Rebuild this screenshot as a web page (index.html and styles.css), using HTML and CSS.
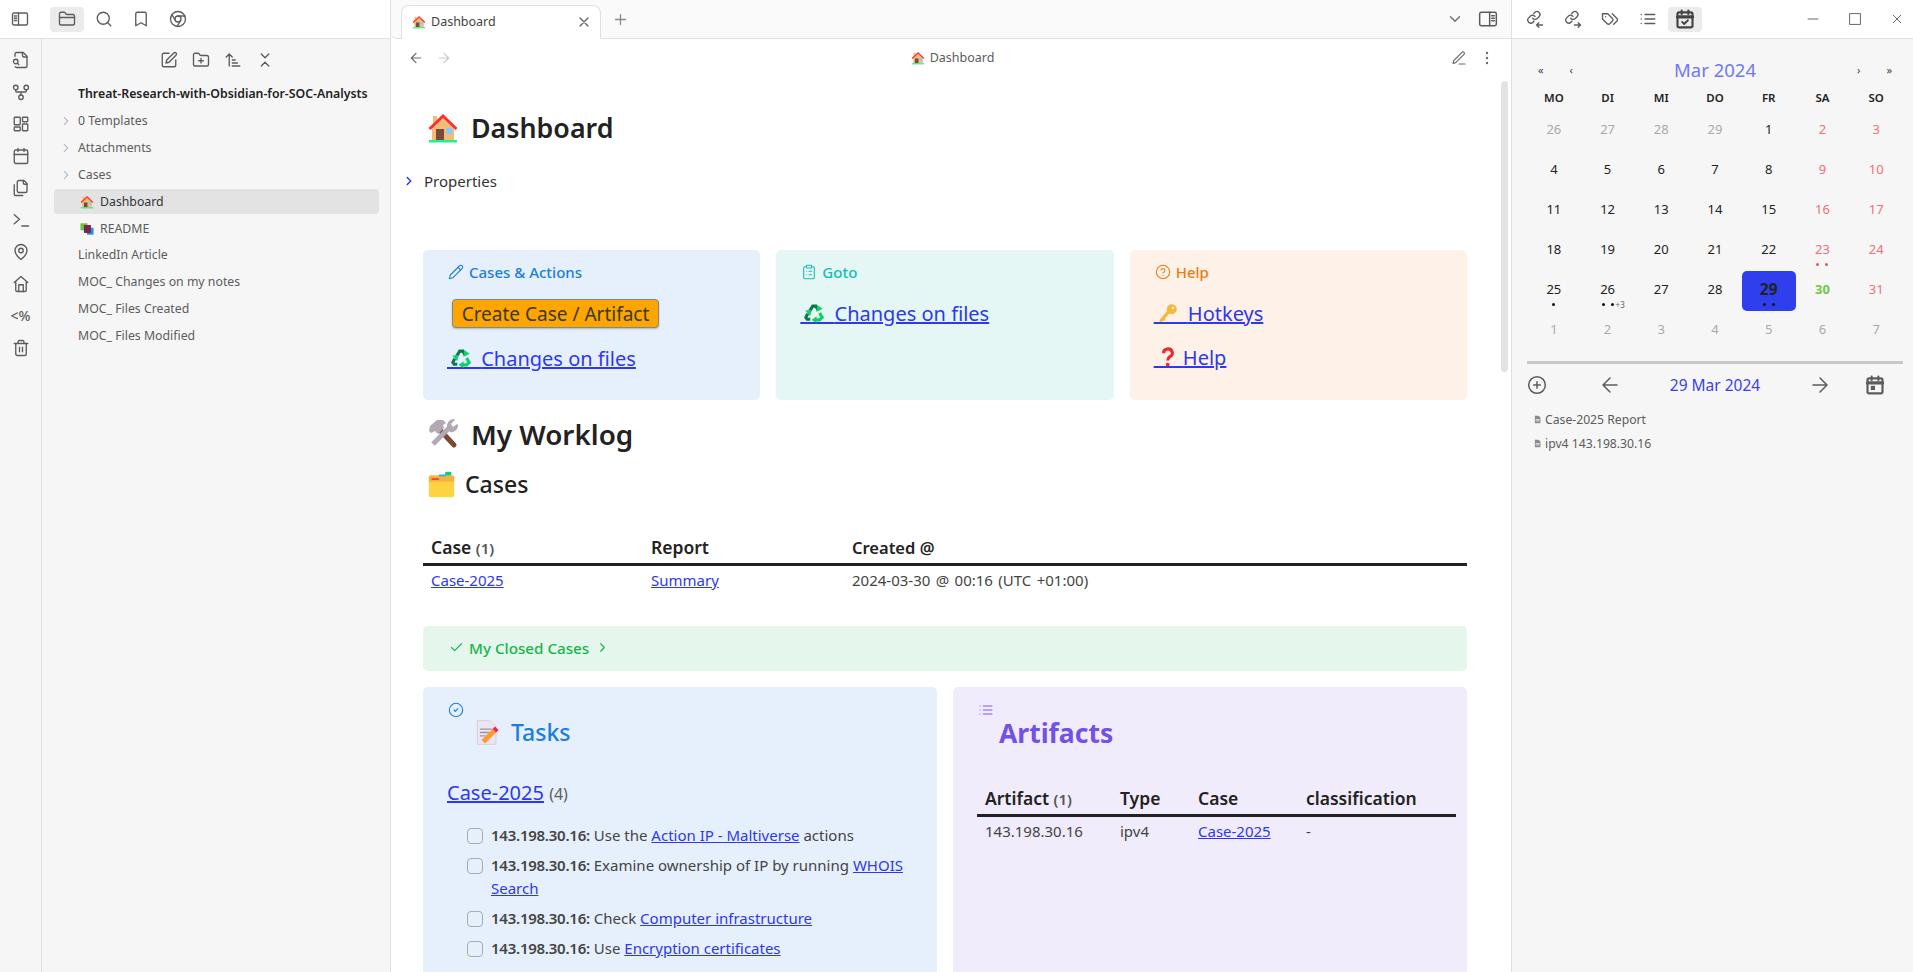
FILE: index.html
```html
<!DOCTYPE html>
<html lang="en">
<head>
    <meta charset="UTF-8">
    <title>Dashboard - Obsidian</title>
    <link rel="stylesheet" href="styles.css">
</head>
<body>
    <svg class="sprite" xmlns="http://www.w3.org/2000/svg">
        <symbol id="sidebar-l" viewBox="0 0 24 24"><rect x="2" y="4" width="20" height="16" rx="2"/><path d="M10 4v16M4.500 8h3M4.500 11h3M4.500 14h3"/></symbol>
        <symbol id="sidebar-r" viewBox="0 0 24 24"><rect x="2" y="4" width="20" height="16" rx="2"/><path d="M14 4v16M16.500 8h3M16.500 11h3M16.500 14h3"/></symbol>
        <symbol id="folder" viewBox="0 0 24 24"><path d="M20 20a2 2 0 0 0 2-2V8a2 2 0 0 0-2-2h-7.900a2 2 0 0 1-1.690-.9L9.600 3.900A2 2 0 0 0 7.930 3H4a2 2 0 0 0-2 2v13a2 2 0 0 0 2 2Z"/><path d="M2 10h20"/></symbol>
        <symbol id="search" viewBox="0 0 24 24"><circle cx="11" cy="11" r="8"/><path d="m21 21-4.300-4.300"/></symbol>
        <symbol id="bookmark" viewBox="0 0 24 24"><path d="m19 21-7-4-7 4V5a2 2 0 0 1 2-2h10a2 2 0 0 1 2 2v16z"/></symbol>
        <symbol id="chrome" viewBox="0 0 24 24"><circle cx="12" cy="12" r="10"/><circle cx="12" cy="12" r="4"/><path d="M21.170 8H12M3.950 6.060 8.540 14M10.880 21.940 15.460 14"/></symbol>
        <symbol id="file-search" viewBox="0 0 24 24"><path d="M14 2v4a2 2 0 0 0 2 2h4"/><path d="M4.268 21a2 2 0 0 0 1.727 1H18a2 2 0 0 0 2-2V7l-5-5H6a2 2 0 0 0-2 2v3"/><path d="m9 18-1.500-1.500"/><circle cx="5" cy="14" r="3"/></symbol>
        <symbol id="fork" viewBox="0 0 24 24"><circle cx="12" cy="19" r="3"/><circle cx="5" cy="6" r="3"/><circle cx="19" cy="6" r="3"/><path d="M19 9v2c0 .6-.4 1-1 1H6c-.6 0-1-.4-1-1V9M12 12v4"/></symbol>
        <symbol id="dash" viewBox="0 0 24 24"><rect x="3" y="3" width="8" height="10" rx="1"/><rect x="14" y="3" width="7" height="6" rx="1"/><rect x="14" y="12" width="7" height="9" rx="1"/><rect x="3" y="16" width="8" height="5" rx="1"/></symbol>
        <symbol id="calendar" viewBox="0 0 24 24"><path d="M8 2v4M16 2v4"/><rect x="3" y="4" width="18" height="18" rx="2"/><path d="M3 10h18"/></symbol>
        <symbol id="files" viewBox="0 0 24 24"><path d="M20 7h-3a2 2 0 0 1-2-2V2"/><path d="M9 18a2 2 0 0 1-2-2V4a2 2 0 0 1 2-2h7l4 4v10a2 2 0 0 1-2 2Z"/><path d="M3 7.600v12.800A1.600 1.600 0 0 0 4.600 22h9.800"/></symbol>
        <symbol id="terminal" viewBox="0 0 24 24"><path d="m3 17 7-6-7-6M13 20h9"/></symbol>
        <symbol id="pin" viewBox="0 0 24 24"><path d="M20 10c0 6-8 12-8 12s-8-6-8-12a8 8 0 0 1 16 0Z"/><circle cx="12" cy="10" r="3"/></symbol>
        <symbol id="home" viewBox="0 0 24 24"><path d="m3 10 9-8 9 8M5 9v11a2 2 0 0 0 2 2h10a2 2 0 0 0 2-2V9"/><path d="M9 22V13h6v9"/></symbol>
        <symbol id="trash" viewBox="0 0 24 24"><path d="M3 6h18M19 6v14c0 1-1 2-2 2H7c-1 0-2-1-2-2V6M8 6V4c0-1 1-2 2-2h4c1 0 2 1 2 2v2M10 11v6M14 11v6"/></symbol>
        <symbol id="edit" viewBox="0 0 24 24"><path d="M12 3H5a2 2 0 0 0-2 2v14a2 2 0 0 0 2 2h14a2 2 0 0 0 2-2v-7"/><path d="M18.375 2.625a2.121 2.121 0 1 1 3 3L12 15l-4 1 1-4Z"/></symbol>
        <symbol id="folder-plus" viewBox="0 0 24 24"><path d="M12 10v6M9 13h6"/><path d="M20 20a2 2 0 0 0 2-2V8a2 2 0 0 0-2-2h-7.900a2 2 0 0 1-1.690-.9L9.600 3.900A2 2 0 0 0 7.930 3H4a2 2 0 0 0-2 2v13a2 2 0 0 0 2 2Z"/></symbol>
        <symbol id="sort" viewBox="0 0 24 24"><path d="m3 8 4-4 4 4M7 4v16M11 12h4M11 16h7M11 20h10"/></symbol>
        <symbol id="collapse" viewBox="0 0 24 24"><path d="m7 20 5-5 5 5M7 4l5 5 5-5"/></symbol>
        <symbol id="chev-r" viewBox="0 0 24 24"><path d="m9 18 6-6-6-6"/></symbol>
        <symbol id="chev-d" viewBox="0 0 24 24"><path d="m6 9 6 6 6-6"/></symbol>
        <symbol id="x" viewBox="0 0 24 24"><path d="M18 6 6 18M6 6l12 12"/></symbol>
        <symbol id="plus" viewBox="0 0 24 24"><path d="M5 12h14M12 5v14"/></symbol>
        <symbol id="arrow-l" viewBox="0 0 24 24"><path d="m12 19-7-7 7-7M19 12H5"/></symbol>
        <symbol id="arrow-r" viewBox="0 0 24 24"><path d="M5 12h14M12 5l7 7-7 7"/></symbol>
        <symbol id="pencil-line" viewBox="0 0 24 24"><path d="M12 21h9M16.500 3.500a2.120 2.120 0 0 1 3 3L7 19l-4 1 1-4Z"/></symbol>
        <symbol id="more" viewBox="0 0 24 24"><circle cx="12" cy="4.500" r="1.800" fill="currentColor" stroke="none"/><circle cx="12" cy="12" r="1.800" fill="currentColor" stroke="none"/><circle cx="12" cy="19.500" r="1.800" fill="currentColor" stroke="none"/></symbol>
        <symbol id="link-in" viewBox="0 0 24 24"><path d="M9 11a4 4 0 0 0 6 .4l2.400-2.400a4 4 0 0 0-5.700-5.700l-1.400 1.400"/><path d="M12 8.500a4 4 0 0 0-6-.4l-2.400 2.400a4 4 0 0 0 5.700 5.700l1.400-1.400"/><path d="M22 20h-8M17 17l-3 3 3 3"/></symbol>
        <symbol id="link-out" viewBox="0 0 24 24"><path d="M9 11a4 4 0 0 0 6 .4l2.400-2.400a4 4 0 0 0-5.700-5.700l-1.400 1.400"/><path d="M12 8.500a4 4 0 0 0-6-.4l-2.400 2.400a4 4 0 0 0 5.700 5.700l1.400-1.400"/><path d="M14 20h8M19 17l3 3-3 3"/></symbol>
        <symbol id="tags" viewBox="0 0 24 24"><path d="M9 5H2v7l6.290 6.290c.94.94 2.480.94 3.420 0l3.580-3.580c.94-.94.94-2.480 0-3.420L9 5Z"/><path d="M6 9.010V9"/><path d="m15 5 6.300 6.300a2.400 2.400 0 0 1 0 3.400L17 19"/></symbol>
        <symbol id="list" viewBox="0 0 24 24"><path d="M8 6h13M8 12h13M8 18h13M3 6h.01M3 12h.01M3 18h.01"/></symbol>
        <symbol id="cal-check" viewBox="0 0 24 24"><path d="M8 2v4M16 2v4" stroke-width="2.600"/><rect x="3" y="4" width="18" height="18" rx="2" stroke-width="2.600"/><path d="M3 9.500h18" stroke-width="4"/><path d="m8.500 15.500 2.500 2.500 4.500-4.500" stroke-width="2.200"/></symbol>
        <symbol id="cal-dot" viewBox="0 0 24 24"><path d="M8 2v4M16 2v4" stroke-width="2.600"/><rect x="3" y="4" width="18" height="18" rx="2" stroke-width="2.600"/><path d="M3 9.500h18" stroke-width="4"/><rect x="7" y="13" width="5" height="5" fill="currentColor" stroke="none"/></symbol>
        <symbol id="minus" viewBox="0 0 24 24"><path d="M4 12h16"/></symbol>
        <symbol id="square" viewBox="0 0 24 24"><rect x="4" y="4" width="16" height="16"/></symbol>
        <symbol id="pencil" viewBox="0 0 24 24"><path d="M17 3a2.850 2.830 0 1 1 4 4L7.500 20.500 2 22l1.500-5.500Z"/><path d="m15 5 4 4"/></symbol>
        <symbol id="clipboard" viewBox="0 0 24 24"><rect x="8" y="2" width="8" height="4" rx="1"/><path d="M16 4h2a2 2 0 0 1 2 2v14a2 2 0 0 1-2 2H6a2 2 0 0 1-2-2V6a2 2 0 0 1 2-2h2M12 11h4M12 16h4M8 11h.01M8 16h.01"/></symbol>
        <symbol id="help" viewBox="0 0 24 24"><circle cx="12" cy="12" r="10"/><path d="M9.090 9a3 3 0 0 1 5.830 1c0 2-3 3-3 3M12 17h.01"/></symbol>
        <symbol id="check" viewBox="0 0 24 24"><path d="M20 6 9 17l-5-5"/></symbol>
        <symbol id="check-circle" viewBox="0 0 24 24"><circle cx="12" cy="12" r="10"/><path d="m9 12 2 2 4-4"/></symbol>
        <symbol id="plus-circle" viewBox="0 0 24 24"><circle cx="12" cy="12" r="10"/><path d="M8 12h8M12 8v8"/></symbol>
        <symbol id="doc" viewBox="0 0 24 24"><path fill="#8a8a8a" stroke="none" d="M5 2h10l5 5v15H5z"/><path stroke="#f6f6f6" stroke-width="2" d="M8 12h9M8 16h9"/></symbol>

        <symbol id="e-house" viewBox="0 0 32 32"><rect x="6" y="4" width="4" height="9" fill="#f4bd77"/><path fill="#f4bd77" d="M5 15 16 5l11 10v13H5z"/><path fill="none" stroke="#ff2d2d" stroke-width="2.800" d="M2.500 17 16 4l13.500 13"/><rect x="9" y="17" width="8" height="11" fill="#7b4a3a"/><rect x="19" y="16" width="6" height="6" fill="#8cc9ff"/><rect x="2" y="28" width="28" height="2.500" fill="#19f28f"/></symbol>
        <symbol id="e-recycle" viewBox="0 0 32 32"><g fill="none" stroke-width="5"><path stroke="#0a7a4d" d="M9 13 14 5h5l4 7"/><path stroke="#0a7a4d" d="M10 26H5l-2-3 3-6"/><path stroke="#10cf67" d="M18 27h7l4-4-4-7"/></g><path fill="#10cf67" d="m21 3 9 6-10 5zM20 21l-8 6 8 5zM2 12l10-1-2 10z"/></symbol>
        <symbol id="e-key" viewBox="0 0 32 32"><path stroke="#f5b83d" stroke-width="5" stroke-linecap="round" fill="none" d="M18 13 5 28"/><circle cx="22" cy="10" r="8" fill="#f5b83d"/><circle cx="24" cy="8" r="2" fill="#fdf0e6"/><path stroke="#f5b83d" stroke-width="3" d="m8 25 3 3"/></symbol>
        <symbol id="e-question" viewBox="0 0 32 32"><path fill="none" stroke="#f5222d" stroke-width="5" d="M9 10a7 6.500 0 1 1 10 5.500c-2.500 1.600-3.500 3-3.500 6"/><circle cx="15.500" cy="28" r="3" fill="#f5222d"/></symbol>
        <symbol id="e-tools" viewBox="0 0 32 32"><path stroke="#7a4a32" stroke-width="5" stroke-linecap="round" d="M13 12 27 27"/><path fill="#b3a9b6" d="M3 8 10 2h6l3 3-3 2 1 3-6 6-3-3-4 2-2-2z"/><path stroke="#b3a9b6" stroke-width="5" d="M6 26 24 8"/><path fill="#b3a9b6" d="M20 8c0-4 3-7 7-7l1 1-4 4 2 3 4-3 1 1c0 5-4 8-8 7z"/></symbol>
        <symbol id="e-folder" viewBox="0 0 32 32"><rect x="2" y="6" width="28" height="24" rx="2" fill="#ffd23f"/><path fill="#f9b040" d="M2 8a2 2 0 0 1 2-2h24a2 2 0 0 1 2 2v5H2z"/><rect x="13" y="5" width="8" height="2" fill="#1fb5e6"/><rect x="5" y="9" width="8" height="2" fill="#f5423b"/><rect x="20" y="2" width="7" height="4" rx="1.500" fill="#19c77d"/></symbol>
        <symbol id="e-memo" viewBox="0 0 32 32"><path fill="#ece6f3" stroke="#cfc8d8" d="M4 2h15l7 7v21H4z"/><path stroke="#9b93a8" stroke-width="1.600" d="M7 12h14M7 16h11M7 20h7"/><path stroke="#ff9a2e" stroke-width="6" d="M11 27 24 14"/><path stroke="#f0245e" stroke-width="6" d="M24 14l3-3"/></symbol>
        <symbol id="e-books" viewBox="0 0 32 32"><rect x="1" y="3" width="16" height="16" fill="#6cc644"/><rect x="16" y="13" width="15" height="16" fill="#2296e0"/><rect x="9" y="7" width="16" height="18" fill="#7d1f4f"/></symbol>
    </svg>

    <div class="left">
        <div class="head left-head">
            <span class="btn"><svg class="i"><use href="#sidebar-l"/></svg></span>
            <span class="btn on first"><svg class="i"><use href="#folder"/></svg></span>
            <span class="btn"><svg class="i"><use href="#search"/></svg></span>
            <span class="btn"><svg class="i"><use href="#bookmark"/></svg></span>
            <span class="btn"><svg class="i"><use href="#chrome"/></svg></span>
        </div>
        <div class="left-body">
            <div class="ribbon">
                <svg class="i"><use href="#file-search"/></svg>
                <svg class="i"><use href="#fork"/></svg>
                <svg class="i"><use href="#dash"/></svg>
                <svg class="i"><use href="#calendar"/></svg>
                <svg class="i"><use href="#files"/></svg>
                <svg class="i"><use href="#terminal"/></svg>
                <svg class="i"><use href="#pin"/></svg>
                <svg class="i"><use href="#home"/></svg>
                <span class="ribbon-text">&lt;%</span>
                <svg class="i"><use href="#trash"/></svg>
            </div>
            <div class="sidebar">
                <div class="nav-btns">
                    <svg class="i"><use href="#edit"/></svg>
                    <svg class="i"><use href="#folder-plus"/></svg>
                    <svg class="i"><use href="#sort"/></svg>
                    <svg class="i"><use href="#collapse"/></svg>
                </div>
                <div class="tree">
                    <div class="row root">Threat-Research-with-Obsidian-for-SOC-Analysts</div>
                    <div class="row"><svg class="i chev"><use href="#chev-r"/></svg>0 Templates</div>
                    <div class="row"><svg class="i chev"><use href="#chev-r"/></svg>Attachments</div>
                    <div class="row"><svg class="i chev"><use href="#chev-r"/></svg>Cases</div>
                    <div class="row active"><svg class="e tree-e"><use href="#e-house"/></svg>Dashboard</div>
                    <div class="row"><svg class="e tree-e"><use href="#e-books"/></svg>README</div>
                    <div class="row plain-first">LinkedIn Article</div>
                    <div class="row">MOC_ Changes on my notes</div>
                    <div class="row">MOC_ Files Created</div>
                    <div class="row">MOC_ Files Modified</div>
                </div>
            </div>
        </div>
    </div>

    <div class="main">
        <div class="head tabbar">
            <div class="tab">
                <svg class="e tab-e"><use href="#e-house"/></svg>
                <span>Dashboard</span>
                <svg class="i tab-x"><use href="#x"/></svg>
            </div>
            <svg class="i tab-plus"><use href="#plus"/></svg>
            <svg class="i tab-down"><use href="#chev-d"/></svg>
            <svg class="i tab-side"><use href="#sidebar-r"/></svg>
        </div>
        <div class="viewhead">
            <svg class="i small"><use href="#arrow-l"/></svg>
            <svg class="i small faded"><use href="#arrow-r"/></svg>
            <div class="viewtitle"><svg class="e tab-e"><use href="#e-house"/></svg>Dashboard</div>
            <svg class="i small"><use href="#pencil-line"/></svg>
            <svg class="i small"><use href="#more"/></svg>
        </div>
        <div class="scrollbar"></div>
        <div class="content">
            <h1 class="page-title"><svg class="e"><use href="#e-house"/></svg>Dashboard</h1>
            <div class="props"><svg class="i"><use href="#chev-r"/></svg>Properties</div>

            <div class="cards">
                <div class="card blue">
                    <div class="card-title"><svg class="i"><use href="#pencil"/></svg>Cases &amp; Actions</div>
                    <div class="card-btn-row"><span class="cta">Create Case / Artifact</span></div>
                    <p class="big-link"><a href="#"><svg class="e"><use href="#e-recycle"/></svg><span class="gap">&nbsp;</span>Changes on files</a></p>
                </div>
                <div class="card teal">
                    <div class="card-title"><svg class="i"><use href="#clipboard"/></svg>Goto</div>
                    <p class="big-link top"><a href="#"><svg class="e"><use href="#e-recycle"/></svg><span class="gap">&nbsp;</span>Changes on files</a></p>
                </div>
                <div class="card orange">
                    <div class="card-title"><svg class="i"><use href="#help"/></svg>Help</div>
                    <p class="big-link top"><a href="#"><svg class="e"><use href="#e-key"/></svg><span class="gap">&nbsp;</span>Hotkeys</a></p>
                    <p class="big-link next"><a href="#"><svg class="e"><use href="#e-question"/></svg><span class="gap short">&nbsp;</span>Help</a></p>
                </div>
            </div>

            <h1 class="worklog"><svg class="e"><use href="#e-tools"/></svg>My Worklog</h1>
            <h2 class="cases-title"><svg class="e"><use href="#e-folder"/></svg>Cases</h2>

            <table class="tbl case-tbl">
                <thead>
                    <tr><th class="c1">Case <small>(1)</small></th><th class="c2">Report</th><th class="c3">Created @</th></tr>
                </thead>
                <tbody>
                    <tr><td><a href="#">Case-2025</a></td><td><a href="#">Summary</a></td><td class="stamp">2024-03-30 @ 00:16 (UTC +01:00)</td></tr>
                </tbody>
            </table>

            <div class="callout">
                <svg class="i"><use href="#check"/></svg>My Closed Cases<svg class="i closed-chev"><use href="#chev-r"/></svg>
            </div>

            <div class="panels">
                <div class="panel blue">
                    <svg class="i panel-icon tasks-icon"><use href="#check-circle"/></svg>
                    <h2 class="tasks-title"><svg class="e"><use href="#e-memo"/></svg>Tasks</h2>
                    <div class="case-link"><a href="#">Case-2025</a> <span>(4)</span></div>
                    <ul class="tasks">
                        <li><span class="box"></span><div><b>143.198.30.16:</b> Use the <a href="#">Action IP - Maltiverse</a> actions</div></li>
                        <li><span class="box"></span><div><b>143.198.30.16:</b> Examine ownership of IP by running <a href="#">WHOIS</a> <a href="#">Search</a></div></li>
                        <li><span class="box"></span><div><b>143.198.30.16:</b> Check <a href="#">Computer infrastructure</a></div></li>
                        <li><span class="box"></span><div><b>143.198.30.16:</b> Use <a href="#">Encryption certificates</a></div></li>
                    </ul>
                </div>
                <div class="panel purple">
                    <svg class="i panel-icon artifacts-icon"><use href="#list"/></svg>
                    <h2 class="artifacts-title">Artifacts</h2>
                    <table class="tbl art-tbl">
                        <thead>
                            <tr><th class="a1">Artifact <small>(1)</small></th><th class="a2">Type</th><th class="a3">Case</th><th>classification</th></tr>
                        </thead>
                        <tbody>
                            <tr><td>143.198.30.16</td><td>ipv4</td><td><a href="#">Case-2025</a></td><td>-</td></tr>
                        </tbody>
                    </table>
                </div>
            </div>
        </div>
    </div>

    <div class="right">
        <div class="head right-head">
            <span class="btn"><svg class="i"><use href="#link-in"/></svg></span>
            <span class="btn"><svg class="i"><use href="#link-out"/></svg></span>
            <span class="btn"><svg class="i"><use href="#tags"/></svg></span>
            <span class="btn"><svg class="i"><use href="#list"/></svg></span>
            <span class="btn on dark"><svg class="i"><use href="#cal-check"/></svg></span>
            <div class="winctl">
                <svg class="i"><use href="#minus"/></svg>
                <svg class="i"><use href="#square"/></svg>
                <svg class="i"><use href="#x"/></svg>
            </div>
        </div>
        <div class="calendar">
            <div class="cal-nav">
                <div class="cal-arrows"><span>«</span><span>‹</span></div>
                <div class="cal-title">Mar 2024</div>
                <div class="cal-arrows"><span>›</span><span>»</span></div>
            </div>
            <div class="cal-grid">
                <div class="dow">MO</div><div class="dow">DI</div><div class="dow">MI</div><div class="dow">DO</div><div class="dow">FR</div><div class="dow">SA</div><div class="dow">SO</div>

                <div class="day out">26</div><div class="day out">27</div><div class="day out">28</div><div class="day out">29</div><div class="day">1</div><div class="day we">2</div><div class="day we">3</div>
                <div class="day">4</div><div class="day">5</div><div class="day">6</div><div class="day">7</div><div class="day">8</div><div class="day we">9</div><div class="day we">10</div>
                <div class="day">11</div><div class="day">12</div><div class="day">13</div><div class="day">14</div><div class="day">15</div><div class="day we">16</div><div class="day we">17</div>
                <div class="day">18</div><div class="day">19</div><div class="day">20</div><div class="day">21</div><div class="day">22</div>
                <div class="day we">23<div class="dots"><i></i><i></i></div></div><div class="day we">24</div>
                <div class="day">25<div class="dots"><i></i></div></div>
                <div class="day">26<div class="dots"><i></i><i></i><em>+3</em></div></div>
                <div class="day">27</div><div class="day">28</div>
                <div class="day sel">29<div class="dots"><i></i><i></i></div></div>
                <div class="day today">30</div><div class="day we">31</div>
                <div class="day out">1</div><div class="day out">2</div><div class="day out">3</div><div class="day out">4</div><div class="day out">5</div><div class="day out">6</div><div class="day out">7</div>
            </div>
            <div class="cal-sep"></div>
            <div class="cal-foot">
                <svg class="i plus-c"><use href="#plus-circle"/></svg>
                <svg class="i arrow"><use href="#arrow-l"/></svg>
                <div class="cal-date">29 Mar 2024</div>
                <svg class="i arrow"><use href="#arrow-r"/></svg>
                <svg class="i cal-d"><use href="#cal-dot"/></svg>
            </div>
            <div class="cal-notes">
                <div><svg class="i"><use href="#doc"/></svg>Case-2025 Report</div>
                <div><svg class="i"><use href="#doc"/></svg>ipv4 143.198.30.16</div>
            </div>
        </div>
    </div>
</body>
</html>
```

FILE: styles.css
```css
*{
    margin:0;
    padding:0;
    box-sizing:border-box;
}
html,body{
    height:100%;
    overflow:hidden;
}
body{
    display:flex;
    font-family:"Noto Sans",sans-serif;
    color:#222;
    background:#fff;
    font-size:15px;
}
a{
    color:#2e38ee;
}
.sprite{
    display:none;
}
/* line icons */
.i{
    width:18px;
    height:18px;
    fill:none;
    stroke:currentColor;
    stroke-width:1.800;
    stroke-linecap:round;
    stroke-linejoin:round;
    color:#5c5c5c;
    flex:none;
}
/* colour emoji */
.e{
    width:30px;
    height:30px;
    flex:none;
}
.head{
    height:39px;
    border-bottom:1px solid #e0e0e0;
    display:flex;
    align-items:center;
    flex:none;
}
.btn{
    width:34px;
    height:25px;
    margin-right:3px;
    border-radius:4px;
    display:flex;
    align-items:center;
    justify-content:center;
}
.btn.on{
    background:#ebebeb;
}
.btn.dark .i{
    color:#444;
    width:20px;
    height:20px;
}

/* left column */
.left{
    width:391px;
    flex:none;
    display:flex;
    flex-direction:column;
    border-right:1px solid #e0e0e0;
}
.left-head{
    padding-left:3px;
    background:#fff;
}
.left-head .first{
    margin-left:10px;
}
.left-body{
    flex:1;
    display:flex;
    background:#f6f6f6;
}
.ribbon{
    width:42px;
    border-right:1px solid #e0e0e0;
    display:flex;
    flex-direction:column;
    align-items:center;
    gap:14px;
    padding-top:12px;
}
.ribbon-text{
    height:18px;
    font-size:14px;
    line-height:18px;
    color:#5c5c5c;
    font-weight:500;
}
.sidebar{
    flex:1;
    padding:12px 11px 0 12px;
}
.nav-btns{
    display:flex;
    justify-content:center;
    gap:14px;
}
.tree{
    margin-top:12px;
}
.row{
    height:25px;
    margin-bottom:2px;
    padding-left:24px;
    display:flex;
    align-items:center;
    font-size:12.300px;
    color:#5c5c5c;
    border-radius:4px;
}
.row.root{
    color:#222;
    font-weight:600;
}
.row.active{
    background:#e3e3e3;
    color:#333;
}
.row.plain-first{
    margin-top:-1px;
}
.chev{
    width:14px;
    height:14px;
    margin-left:-19px;
    margin-right:5px;
    color:#a8a8a8;
}
.tree-e{
    width:14px;
    height:14px;
    margin-left:2px;
    margin-right:6px;
}

/* centre column */
.main{
    width:1120px;
    flex:none;
    display:flex;
    flex-direction:column;
    position:relative;
}
.tabbar{
    background:#fafafa;
    padding-left:10px;
    align-items:flex-end;
    border-bottom-left-radius:6px;
}
.tab{
    width:200px;
    height:34px;
    margin-bottom:-1px;
    background:#fff;
    border:1px solid #e0e0e0;
    border-bottom:0;
    border-radius:8px 8px 0 0;
    display:flex;
    align-items:center;
    padding:0 8px 2px 10px;
    font-size:12.500px;
    color:#444;
}
.tab-e{
    width:14px;
    height:14px;
    margin-right:5px;
}
.tab-x{
    margin-left:auto;
    width:16px;
    height:16px;
}
.tab-plus{
    margin:0 0 10px 11px;
    color:#8a8a8a;
    width:17px;
    height:17px;
}
.tab-down{
    margin:0 0 10px auto;
    color:#6e6e6e;
}
.tab-side{
    margin:0 13px 9px 14px;
    width:20px;
    height:20px;
}
.viewhead{
    height:37px;
    display:flex;
    align-items:center;
    padding:0 16px 0 17px;
    gap:12px;
    flex:none;
}
.small{
    width:16px;
    height:16px;
    color:#6a6a6a;
}
.faded{
    color:#c8c8c8;
}
.viewtitle{
    flex:1;
    display:flex;
    justify-content:center;
    align-items:center;
    font-size:12.500px;
    color:#5c5c5c;
    padding-left:2px;
}
.scrollbar{
    position:absolute;
    left:1110px;
    top:81px;
    width:7px;
    height:291px;
    border-radius:4px;
    background:#e3e3e3;
}
.content{
    flex:1;
    overflow:hidden;
    width:1076px;
    padding:34px 0 0 32px;
}
.page-title,.worklog{
    display:flex;
    align-items:center;
    font-size:26.800px;
    line-height:36px;
    font-weight:600;
    padding-left:4px;
}
.page-title .e,.worklog .e{
    width:32px;
    height:32px;
    margin-right:12px;
}
.props{
    margin:24px 0 0 -21px;
    height:22px;
    display:flex;
    align-items:center;
    font-size:15px;
    color:#333;
}
.props .i{
    width:14px;
    height:14px;
    color:#2e38ee;
    stroke-width:2.500;
    margin-right:8px;
}

/* callout cards */
.cards{
    display:grid;
    grid-template-columns:repeat(3,minmax(0,1fr));
    gap:16px;
    margin-top:58px;
    height:150px;
}
.card{
    border-radius:5px;
    padding:12px 24px 0;
}
.blue{background:#e6f0fc;}
.teal{background:#e4f7f5;}
.orange{background:#fef1e7;}
.purple{background:#f1ecfc;}
.card-title{
    display:flex;
    align-items:center;
    height:20px;
    font-size:15px;
    font-weight:500;
    padding-left:1px;
}
.card-title .i{
    width:16px;
    height:16px;
    margin-right:5px;
    stroke-width:1.600;
}
.blue .card-title,.blue .card-title .i{color:#1a7ee0;}
.teal .card-title,.teal .card-title .i{color:#0fbfb6;}
.orange .card-title,.orange .card-title .i{color:#f27a0c;}
.card-btn-row{
    margin:17px 0 0 5px;
}
.cta{
    display:inline-block;
    width:207px;
    height:29px;
    line-height:28px;
    text-align:center;
    font-size:19px;
    white-space:nowrap;
    color:#3a3a28;
    background:#ffa500;
    border:1px solid #7c8a8c;
    border-radius:4px;
    box-shadow:0 1px 2px rgba(0,0,0,.25);
}
.big-link{
    font-size:20px;
    line-height:28px;
    margin-top:17px;
}
.big-link.top{
    margin-top:18px;
}
.big-link.next{
    margin-top:16px;
}
.big-link a{
    position:relative;
    display:inline-block;
    text-decoration-thickness:2px;
}
.big-link .e{
    position:absolute;
    left:4px;
    top:3px;
    width:20px;
    height:20px;
}
.gap{
    letter-spacing:29px;
}
.gap.short{
    letter-spacing:24px;
}
.worklog{
    margin-top:16px;
    font-size:27.800px;
}
.cases-title{
    display:flex;
    align-items:center;
    margin-top:17px;
    font-size:23px;
    line-height:30px;
    font-weight:500;
    padding-left:4px;
}
.cases-title .e{
    width:29px;
    height:29px;
    margin-right:9px;
}

/* tables */
.tbl{
    width:100%;
    border-collapse:collapse;
    table-layout:fixed;
    font-size:15px;
}
.tbl th{
    text-align:left;
    font-size:17.500px;
    font-weight:600;
    height:32px;
    padding:0 8px;
    border-bottom:3px solid #222;
    white-space:nowrap;
}
.tbl th small{
    font-size:15px;
    color:#555;
}
.tbl td{
    padding:0 8px 2px;
    height:32px;
    color:#444;
}
.case-tbl{
    margin-top:33px;
}
.c1{width:220px;}
.c2{width:201px;}
.tbl th.c3{
    font-size:16.500px;
}
.stamp{
    word-spacing:1.500px;
}
.callout{
    margin-top:30px;
    height:45px;
    border-radius:5px;
    background:#e5f6ec;
    display:flex;
    align-items:center;
    padding:0 0 2px 26px;
    font-size:15.200px;
    font-weight:500;
    color:#12b84a;
}
.callout .i{
    width:15px;
    height:15px;
    color:#12b84a;
    margin-right:5px;
}
.callout .closed-chev{
    margin:0 0 0 6px;
}

/* tasks and artifacts */
.panels{
    display:grid;
    grid-template-columns:repeat(2,minmax(0,1fr));
    gap:16px;
    margin-top:16px;
}
.panel{
    height:320px;
    border-radius:5px;
    padding:15px 25px 0;
}
.panel-icon{
    display:block;
    width:16px;
    height:16px;
    stroke-width:1.600;
}
.tasks-icon{color:#1a7ee0;}
.artifacts-icon{color:#7e55f0;}
.tasks-title{
    display:flex;
    align-items:center;
    margin-top:-2px;
    padding-left:26px;
    line-height:32px;
    font-size:23px;
    font-weight:500;
    color:#1a7ee0;
}
.tasks-title .e{
    width:27px;
    height:27px;
    margin-right:10px;
}
.case-link{
    margin:31px 0 0 -1px;
    line-height:28px;
    font-size:20px;
}
.case-link span{
    font-size:16px;
    color:#5c5c5c;
}
.tasks{
    list-style:none;
    margin-top:16px;
    padding-left:19px;
    font-size:15px;
    line-height:23px;
    color:#444;
}
.tasks li{
    display:flex;
    margin-bottom:7px;
}
.tasks b{
    font-weight:600;
    letter-spacing:-.25px;
}
.box{
    width:16px;
    height:16px;
    margin:4px 8px 0 0;
    border:1px solid #aaa;
    border-radius:4px;
    flex:none;
}
.artifacts-title{
    margin-top:-1px;
    padding-left:21px;
    line-height:32px;
    font-size:26.500px;
    font-weight:700;
    color:#7152e8;
}
.art-tbl{
    margin:34px 0 0 -1px;
    width:479px;
}
.a1{width:135px;}
.a2{width:78px;}
.a3{width:108px;}

/* right column */
.right{
    flex:1;
    display:flex;
    flex-direction:column;
    border-left:1px solid #e0e0e0;
    background:#f6f6f6;
}
.right-head{
    background:#fff;
    padding-left:6px;
}
.right-head .btn{
    margin-right:3.500px;
}
.winctl{
    margin-left:auto;
    display:flex;
    gap:26px;
    padding-right:8px;
}
.winctl .i{
    width:16px;
    height:16px;
    stroke-width:1.200;
    stroke-linecap:butt;
    stroke-linejoin:miter;
    color:#444;
}
.calendar{
    padding:17px 10px 0 15px;
    flex:1;
}
.cal-nav{
    display:flex;
    justify-content:space-between;
    align-items:center;
    height:26px;
    padding:0 11px;
}
.cal-arrows{
    width:35px;
    display:flex;
    justify-content:space-between;
    font-size:11px;
    color:#444;
}
.cal-title{
    font-size:18.500px;
    color:#7179f0;
}
.cal-grid{
    display:grid;
    grid-template-columns:repeat(7,1fr);
    grid-template-rows:24px;
    grid-auto-rows:40px;
    margin-top:5px;
}
.dow{
    height:22px;
    font-size:11.500px;
    font-weight:600;
    text-align:center;
    line-height:22px;
    color:#222;
}
.day{
    padding-top:8px;
    text-align:center;
    font-size:13px;
    line-height:20px;
    color:#222;
    border-radius:5px;
}
.day.out{color:#aaa;}
.day.we{color:#f0707a;}
.day.today{
    color:#6ecb3f;
    font-weight:700;
}
.day.sel{
    background:#2f3fee;
    font-size:15.500px;
    font-weight:700;
}
.dots{
    height:3px;
    margin-top:4px;
    display:flex;
    justify-content:center;
    align-items:center;
    gap:6px;
    position:relative;
}
.dots i{
    width:3px;
    height:3px;
    border-radius:50%;
    background:#111;
}
.we .dots i{
    background:#f0505a;
}
.dots em{
    position:absolute;
    left:calc(50% + 8px);
    font-style:normal;
    font-size:8px;
    color:#666;
}
.cal-sep{
    height:3px;
    margin-top:10px;
    background:#c8c8c8;
}
.cal-foot{
    display:flex;
    align-items:center;
    height:20px;
    margin-top:11px;
}
.plus-c{
    width:20px;
    height:20px;
    margin-right:51px;
}
.arrow{
    width:24px;
    height:24px;
    stroke-width:1.500;
}
.cal-date{
    flex:1;
    text-align:center;
    font-size:15.500px;
    color:#3d3df0;
}
.cal-d{
    width:20px;
    height:20px;
    margin:0 18px 0 33px;
}
.cal-notes{
    margin-top:13px;
    padding-left:6px;
    font-size:12.200px;
    line-height:23px;
    color:#5c5c5c;
}
.cal-notes div{
    display:flex;
    align-items:center;
    height:23.500px;
}
.cal-notes .i{
    width:9px;
    height:9px;
    margin-right:3px;
}
```
